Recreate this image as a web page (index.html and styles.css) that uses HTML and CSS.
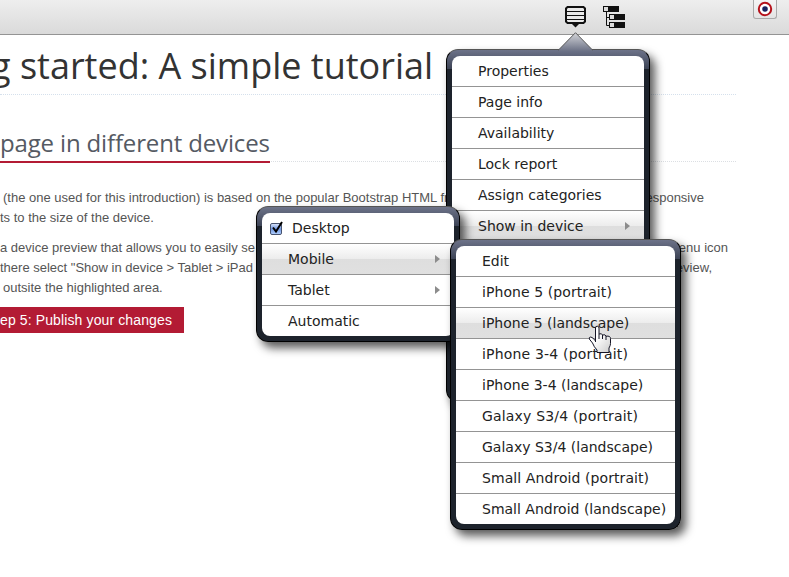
FILE: index.html
```
<!DOCTYPE html>
<html lang="en">
<head>
<meta charset="utf-8">
<title>A simple tutorial</title>
<link rel="stylesheet" href="styles.css">
</head>
<body>
<header class="toolbar">
  <svg class="tool-menu" width="22" height="22" viewBox="0 0 22 22"><path d="M2.500 1h16l1.500 1.500v13L18.500 17h-16L1 15.500v-13z" fill="#e9e9e9" stroke="#111" stroke-width="2"/><path d="M1 5.500h19M1 9.500h19M1 13.500h19" stroke="#111" stroke-width="1.100"/><path d="M6.500 17.500h8L10.500 21.500z" fill="#111"/></svg>
  <svg class="tool-tree" width="23" height="23" viewBox="0 0 23 23"><path d="M3.500 5v14.500H8M3.500 11.500H8" fill="none" stroke="#111"/><path d="M0 0h16v6H0zM6 8h16v6H6zM6 16h16v6H6z" fill="#111"/><path d="M1 1h4v4H1zM7 9h4v4H7zM7 17h4v4H7z" fill="#ddd"/></svg>
  <div class="target"><svg width="16" height="16" viewBox="0 0 16 16"><circle cx="8" cy="8" r="6.200" fill="#fff" stroke="#b5121b" stroke-width="2"/><circle cx="8" cy="8" r="2.800" fill="#17215f"/></svg></div>
</header>
<main class="page">
  <h1><span class="t1">g started: A simple tutorial</span></h1>
  <h2><span><span class="t2">page in different devices</span></span></h2>
  <div class="copy">
    <p><span class="line l1"><span>(the one used for this introduction) is based on the popular Bootstrap HTML fr</span><span>responsive</span></span><span class="line l2"><span>ts to the size of the device.</span></span></p>
    <p><span class="line l3"><span>a device preview that allows you to easily se</span><span>menu icon</span></span><span class="line l4"><span>there select "Show in device &gt; Tablet &gt; iPad</span><span>preview,</span></span><span class="line l5"><span>outsite the highlighted area.</span></span></p>
  </div>
  <a class="step"><span>ep 5: Publish your changes</span></a>
</main>

<nav class="menu main-menu">
  <svg class="pointer" width="36" height="19" viewBox="0 0 36 19"><defs><linearGradient id="p" x2="0" y2="1"><stop stop-color="#d4d5d9"/><stop offset="1" stop-color="#6b7185"/></linearGradient></defs><path d="M0 19L1 17.500 17.500.7 34 17.500 36 19z" fill="url(#p)"/><path d="M0 18.200L1 17.500 17.500.7 34 17.500l1 .7" fill="none" stroke="#555"/></svg>
  <ul>
    <li><span>Properties</span></li><li><span>Page info</span></li><li><span>Availability</span></li><li><span>Lock report</span></li><li><span>Assign categories</span></li>
    <li class="on sub"><span>Show in device</span></li><li></li><li></li><li></li><li></li><li></li>
  </ul>
</nav>
<nav class="menu type-menu">
  <ul>
    <li class="checked"><svg width="15" height="15" viewBox="0 0 15 15"><defs><linearGradient id="c" x2="0" y2="1"><stop stop-color="#dfe8fb"/><stop offset=".5" stop-color="#6f95df"/><stop offset="1" stop-color="#b4d2ff"/></linearGradient></defs><rect x=".5" y="2.500" width="11" height="11" rx="1.500" fill="url(#c)" stroke="#47536f"/><path d="M3 6.500l3 4L12 1" fill="none" stroke="#000" stroke-width="2"/></svg><span>Desktop</span></li>
    <li class="on sub"><span>Mobile</span></li><li class="sub"><span>Tablet</span></li><li><span>Automatic</span></li>
  </ul>
</nav>
<nav class="menu device-menu">
  <ul>
    <li><span>Edit</span></li><li class="wide"><span>iPhone 5 (portrait)</span></li><li class="on"><span>iPhone 5 (landscape)</span></li><li class="wider"><span>iPhone 3-4 (portrait)</span></li><li><span>iPhone 3-4 (landscape)</span></li><li class="wider"><span>Galaxy S3/4 (portrait)</span></li><li><span>Galaxy S3/4 (landscape)</span></li><li class="wide"><span>Small Android (portrait)</span></li><li><span>Small Android (landscape)</span></li>
  </ul>
</nav>
<svg class="hand" width="24" height="30" viewBox="0 0 24 30"><defs><linearGradient id="h" x2="1" y2="1"><stop offset=".4" stop-color="#fff"/><stop offset="1" stop-color="#ccc"/></linearGradient></defs><path d="M7.500 17V3q0-1.800 1.700-1.800T11 3v6q3-1 3.500 1 3-1 3.500 1.200 4.500-.6 4.500 2.300v5q0 2-1.500 4.500v4.500H9V25q-3-3-4.500-7L1.300 14q-.5-2 1.500-2 2 .2 4.700 4z" fill="url(#h)" stroke="#151525"/><path d="M11 9v5M14.500 10v4M18 11v4" stroke="#151525" fill="none"/></svg>
</body>
</html>
```
FILE: styles.css
```
* { box-sizing: border-box; }
body { margin: 0; width: 789px; height: 577px; overflow: hidden; position: relative; background: #fff; font-family: "Liberation Sans", sans-serif; }
.toolbar { height: 35px; border-bottom: 1px solid #949494; background: linear-gradient(#eee, #dadada); display: flex; align-items: flex-start; padding-left: 565px; }
.tool-menu { margin-top: 6px; }
.tool-tree { margin: 6px 0 0 16px; }
.target { width: 24px; height: 19px; margin-left: 127px; border: 1px solid #aaa; border-top: 0; border-radius: 0 0 3px 3px; background: linear-gradient(#f4f4f4, #e4e4e4); display: flex; justify-content: center; align-items: center; }
.page { width: 736px; }
h1, h2, p { margin: 0; }
h1 { height: 60px; border-bottom: 1px dotted #d5e0ec; font: 400 36px/62px "Open Sans", sans-serif; color: #333; white-space: nowrap; display: flex; }
.t1 { margin-left: -9px; }
h2 { height: 67px; border-bottom: 1px dotted #dcdfe3; display: flex; align-items: flex-end; font: 400 24px/35px "Open Sans", sans-serif; color: #555a63; white-space: nowrap; }
h2 > span { width: 270px; height: 38px; border-bottom: 2px solid #b31b34; margin-bottom: -2px; }
.t2 { margin-left: 0; letter-spacing: -.15px; }
.copy { padding-top: 26px; font-size: 13px; line-height: 20px; color: #555; white-space: nowrap; }
.copy p { margin-bottom: 10px; }
.line { display: flex; justify-content: space-between; }
.l1 { padding-left: 3px; width: 704px; }
.l3 { width: 728px; }
.l4 { width: 712px; }
.l5 { padding-left: 3px; }
.step { display: block; width: 184px; height: 26px; margin-top: -1px; background: #b31b34; color: #fff; font-size: 14px; letter-spacing: .12px; line-height: 26px; white-space: nowrap; }
.menu { position: absolute; border: 1px solid #000; border-top-color: #555; border-radius: 12px; padding: 6px 5px 5px; background: linear-gradient(#6d7389 0, #3c4355 19px, #1d232c 19px, #1d232c 100%); box-shadow: 5px 6px 10px rgba(0,0,0,.65); }
.main-menu { left: 446px; top: 49px; width: 204px; }
.type-menu { left: 256px; top: 206px; width: 204px; }
.device-menu { left: 450px; top: 239px; width: 231px; }
.pointer { position: absolute; left: 111px; top: -18px; }
ul { list-style: none; margin: 0; padding: 0; border-radius: 8px; overflow: hidden; background: #fff; }
li { display: flex; align-items: center; height: 31px; border-bottom: 1px solid #949494; padding-left: 26px; font: 14px/30px "DejaVu Sans", sans-serif; color: #222; white-space: nowrap; }
li:last-child { height: 30px; border-bottom: 0; }
.on { background: linear-gradient(#fff 0, #ececec 50%, #dedede 50%, #e0e0e0 100%); }
.sub::after { content: ""; margin: 0 14px 0 auto; border: 4px solid transparent; border-left: 5px solid #8c8c8c; border-right: 0; }
.wide { letter-spacing: .08px; }
.wider { letter-spacing: .18px; }
.checked { padding-left: 8px; }
.checked span { margin-left: 7px; }
.hand { position: absolute; left: 588px; top: 325px; }
```
